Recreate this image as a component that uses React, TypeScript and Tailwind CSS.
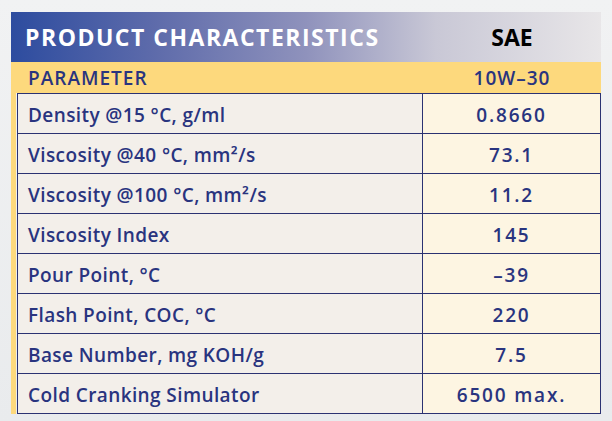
import React from "react";

const rows: [string, string][] = [
  ["Density @15 °C, g/ml", "0.8660"],
  ["Viscosity @40 °C, mm²/s", "73.1"],
  ["Viscosity @100 °C, mm²/s", "11.2"],
  ["Viscosity Index", "145"],
  ["Pour Point, °C", "–39"],
  ["Flash Point, COC, °C", "220"],
  ["Base Number, mg KOH/g", "7.5"],
  ["Cold Cranking Simulator", "6500 max."],
];

export default function App() {
  return (
    <div
      className="w-[612px] h-[421px] overflow-hidden bg-[linear-gradient(180deg,#f1f2f3,#e9ebed)] pt-[12px] pl-[11px]"
      style={{ fontFamily: '"Open Sans", "Liberation Sans", sans-serif' }}
    >
      <div className="w-[590px]">
        {/* Header */}
        <div className="flex h-[50px] items-center bg-[linear-gradient(90deg,#2d4c9f_0%,#5f6cab_25%,#8f92bc_50%,#c9c8d6_72%,#e8e6e8_100%)]">
          <div className="w-[412px] pl-[14px] text-[23px] font-bold tracking-[1.5px] text-white">
            PRODUCT CHARACTERISTICS
          </div>
          <div className="flex-1 text-center text-[23px] font-bold text-black">SAE</div>
        </div>

        {/* Parameter row */}
        <div className="flex h-[31px] items-center bg-[#fdd97d] pt-[1px] text-[19px] font-semibold text-[#29347f]">
          <div className="w-[412px] pl-[17px] tracking-[1px]">PARAMETER</div>
          <div className="flex-1 text-center tracking-[1px]">10W–30</div>
        </div>

        {/* Body */}
        <div className="flex">
          <div className="w-[5px] bg-[#fdd97d]" />
          <div className="ml-[1px] flex-1 border-b border-[#2b3272] text-[19px] font-semibold text-[#29347f]">
            {rows.map(([label, value]) => (
              <div key={label} className="flex h-[40px] border-t border-[#2b3272]">
                <div className="flex w-[406px] items-center border-l border-r border-[#2b3272] bg-[#f3efea] pl-[10px] pt-[3px] tracking-[0.4px]">
                  {label}
                </div>
                <div className="flex flex-1 items-center justify-center border-r border-[#2b3272] bg-[#fdf5e2] pt-[3px] tracking-[1.8px]">
                  {value}
                </div>
              </div>
            ))}
          </div>
        </div>
      </div>
    </div>
  );
}
